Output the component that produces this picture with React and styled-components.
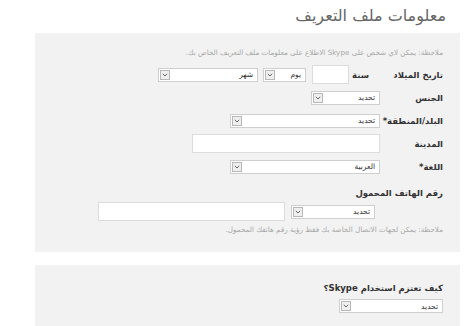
import React from 'react'
import styled, { createGlobalStyle } from 'styled-components'

const GlobalStyle = createGlobalStyle`
  html, body {
    margin: 0;
    background: #fff;
  }
  body {
    font-family: "DejaVu Sans", "Noto Sans", sans-serif;
    direction: rtl;
  }
`;

const Page = styled.div`
  width: 465px;
  height: 326px;
  overflow: hidden;
  box-sizing: border-box;
  padding: 0 5px 0 35px;
`;

const Title = styled.h1`
  margin: 0;
  height: 33px;
  padding-right: 14px;
  font-size: 16px;
  font-weight: normal;
  line-height: 32px;
  color: #666;
`;

const Panel = styled.section`
  background: #f2f2f2;
  box-sizing: border-box;
  height: ${p => p.$h}px;
  margin-top: ${p => p.$mt || 0}px;
  padding: ${p => p.$pt}px 17px 0 17px;
`;

const Note = styled.p`
  margin: ${p => p.$mt || 0}px 0 0;
  font-size: 7.2px;
  line-height: 12px;
  color: #a8a8a8;
  white-space: nowrap;
`;

const Rows = styled.div`
  margin-top: 4px;
  display: flex;
  flex-direction: column;
`;

const Row = styled.div`
  display: flex;
  align-items: center;
  height: 23px;
`;

const Label = styled.label`
  width: 63px;
  flex-shrink: 0;
  font-size: 8.5px;
  font-weight: bold;
  color: #333;
  white-space: nowrap;
`;

const Fields = styled.div`
  display: flex;
  align-items: center;
  gap: ${p => p.$gap || 0}px;
  padding-right: ${p => p.$indent || 0}px;
  margin-top: ${p => p.$mt || 0}px;
`;

const SubLabel = styled.span`
  font-size: 8.5px;
  font-weight: bold;
  color: #333;
  margin-left: 3px;
`;

const TextInput = styled.div`
  width: ${p => p.$w}px;
  height: 19px;
  box-sizing: border-box;
  background: #fff;
  border: 1px solid #dcdcdc;
`;

const SelectBox = styled.div`
  width: ${p => p.$w}px;
  height: 14px;
  box-sizing: border-box;
  background: #fff;
  border: 1px solid #cfcfcf;
  display: flex;
  align-items: center;
  justify-content: space-between;
  padding: 0 4px 0 1px;
  font-size: 7.5px;
  color: #333;
  white-space: nowrap;
`;

const ArrowBox = styled.span`
  width: 10px;
  height: 10px;
  box-sizing: border-box;
  border: 1px solid #b8b8b8;
  background: #efefef;
  display: flex;
  align-items: center;
  justify-content: center;
`;

const SectionLabel = styled.div`
  margin-top: ${p => p.$mt || 0}px;
  font-size: 8.5px;
  font-weight: bold;
  line-height: 16px;
  color: #333;
`;

const PhoneRow = styled(Fields)`
  height: 19px;
`;

const Select = ({ w, value }) => (
  <SelectBox $w={w}>
    <span>{value}</span>
    <ArrowBox>
      <svg width="6" height="4" viewBox="0 0 6 4">
        <path d="M0.8 0.8 L3 3 L5.2 0.8" fill="none" stroke="#666" strokeWidth="1" />
      </svg>
    </ArrowBox>
  </SelectBox>
)

const App = () => (
  <Page>
    <GlobalStyle />
    <Title>معلومات ملف التعريف</Title>

    <Panel $h={219} $pt={14}>
      <Note>ملاحظة: يمكن لاي شخص على Skype الاطلاع على معلومات ملف التعريف الخاص بك.</Note>
      <Rows>
        <Row>
          <Label>تاريخ الميلاد</Label>
          <Fields $indent={11}>
            <SubLabel>سنة</SubLabel>
            <TextInput $w={37} />
            <Fields $gap={5} $indent={6}>
              <Select w={43} value="يوم" />
              <Select w={100} value="شهر" />
            </Fields>
          </Fields>
        </Row>
        <Row>
          <Label>الجنس</Label>
          <Select w={69} value="تحديد" />
        </Row>
        <Row>
          <Label>البلد/المنطقة*</Label>
          <Select w={150} value="تحديد" />
        </Row>
        <Row>
          <Label>المدينة</Label>
          <TextInput $w={188} />
        </Row>
        <Row>
          <Label>اللغة*</Label>
          <Select w={150} value="العربية" />
        </Row>
      </Rows>
      <SectionLabel $mt={7}>رقم الهاتف المحمول</SectionLabel>
      <PhoneRow $gap={6} $indent={68} $mt={1}>
        <Select w={84} value="تحديد" />
        <TextInput $w={187} />
      </PhoneRow>
      <Note $mt={3}>ملاحظة: يمكن لجهات الاتصال الخاصة بك فقط رؤية رقم هاتفك المحمول.</Note>
    </Panel>

    <Panel $h={61} $mt={13} $pt={15}>
      <SectionLabel>كيف تعتزم استخدام Skype؟</SectionLabel>
      <Fields $mt={3}>
        <Select w={104} value="تحديد" />
      </Fields>
    </Panel>
  </Page>
)

export default App
